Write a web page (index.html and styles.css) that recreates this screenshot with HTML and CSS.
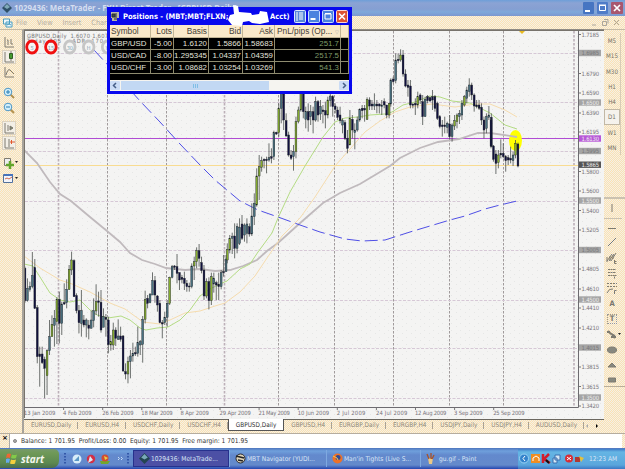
FILE: index.html
```html
<!DOCTYPE html>
<html lang="en">
<head>
  <meta charset="UTF-8">
  <title>MetaTrader</title>
  <link rel="stylesheet" href="styles.css">
</head>
<body>
  <div class="titlebar">
    <svg class="app-icon" width="10" height="10" viewBox="0 0 10 10"><path d="M5 0L10 5L5 10L0 5Z" fill="#2f5068"/><path d="M5 1L8 4L5 6L2 4Z" fill="#7fa9b8"/></svg>
    <div class="title">1029436: MetaTrader - FXU Direct Trader - [GBPUSD,Daily]</div>
    <div class="win-buttons">
      <svg width="11" height="12" viewBox="0 0 11 12"><rect width="11" height="12" rx="1" fill="#4675c2"/><path d="M2 9h5" stroke="#fff" stroke-width="2"/></svg>
      <svg width="11" height="12" viewBox="0 0 11 12"><rect width="11" height="12" rx="1" fill="#4f7cc8"/><path d="M2.5 3.5h6v5h-6zM2 3h7" stroke="#fff" fill="none"/></svg>
      <svg width="12" height="12" viewBox="0 0 12 12"><rect width="12" height="12" rx="1" fill="#a8576f"/><path d="M3 3l6 6M9 3l-6 6" stroke="#fff" stroke-width="1.7"/></svg>
    </div>
  </div>

  <div class="menubar">
    <svg width="10" height="10" viewBox="0 0 10 10"><path d="M.5 1h6v5h-6zM3 4h6v5H3z" fill="#eef8fb" stroke="#4b9dc0"/><path d="M4 7l2-1 2 1" stroke="#4b9dc0" fill="none"/></svg>
    <ul class="menu-list">
      <li>File</li>
      <li>View</li>
      <li>Insert</li>
      <li>Charts</li>
    </ul>
    <svg class="mdi-buttons" width="32" height="9" viewBox="0 0 32 9" fill="none" stroke="#aaa69d"><path d="M2 7h4M12.500 3.500h4v4h-4zM14 1.500h4v4M24 2l5 5M29 2l-5 5"/></svg>
  </div>

  <div class="main">
    <div class="toolbar left">
      <svg width="12" height="12" viewBox="0 0 12 12"><path d="M2 1v10h9M5 4v5M5 4h-1M8 3v5M8 8h2" /></svg>
      <svg class="pressed" width="12" height="12" viewBox="0 0 12 12"><path d="M2 1v10h9"/><path d="M8 0v10"/><path d="M6.500 2.500h3v5h-3z" fill="#439b2f" stroke="#315d24"/></svg>
      <svg width="12" height="12" viewBox="0 0 12 12"><path d="M2 1v10h9M3 9q2-7 4-5t4 4"/></svg>
      <svg class="sep" width="12" height="12" viewBox="0 0 12 12"><path d="M7 7l4 4" stroke="#b3914e" stroke-width="2"/><circle cx="5" cy="5" r="3.800" fill="#d3effa" stroke="#4b95c6"/><path d="M3 5h4M5 3v4" stroke="#267cb5"/></svg>
      <svg width="12" height="12" viewBox="0 0 12 12"><path d="M7 7l4 4" stroke="#b3914e" stroke-width="2"/><circle cx="5" cy="5" r="3.800" fill="#d3effa" stroke="#4b95c6"/><path d="M3 5h4" stroke="#267cb5"/></svg>
      <svg class="sep pressed" width="12" height="12" viewBox="0 0 12 12"><path d="M2 1v10h9M5 3v6"/><path d="M7 4l3 2-3 2z" fill="#74806c"/></svg>
      <svg class="pressed" width="12" height="12" viewBox="0 0 12 12"><path d="M2 1v10h9M6 2v8"/><path d="M7 5h5M8.500 3v4" stroke="#e2582d"/></svg>
      <svg class="sep" width="15" height="12" viewBox="0 0 15 12"><path d="M1.500 1.500h6v7h-6z" fill="#eee"/><path d="M7 4v8M3 8h8" stroke="#62a52b" stroke-width="2.500"/><path d="M12 4h3l-1.500 2z" fill="#222" stroke="none"/></svg>
      <svg width="15" height="12" viewBox="0 0 15 12"><path d="M.5 1.500h9v8h-9z" fill="#f2f4fa" stroke="#52719c"/><path d="M1 2h9" stroke="#4674bd" stroke-width="2"/><path d="M2 6l2-1 2 1 3-2" stroke="#cf6a50" fill="none"/><path d="M12 4h3l-1.500 2z" fill="#222" stroke="none"/></svg>
    </div>

    <div class="workspace">
      <svg id="chart" width="580" height="389" viewBox="24 30 580 389">
        <defs>
          <pattern id="dots" width="9" height="7" patternUnits="userSpaceOnUse"><path d="M1 1.500h1M6 4.500h1" stroke="#e6e7e6"/></pattern>
        </defs>
        <rect x="24" y="30" width="580" height="389" fill="#f4f4f3"/>
        <rect x="24" y="30" width="580" height="389" fill="url(#dots)"/>
        <g id="grid"></g>
        <path d="M24 138.500H579" stroke="#b04bd4"/>
        <path d="M24 165.500H579" stroke="#f8dc92"/>
        <ellipse cx="515.500" cy="140.500" rx="6.500" ry="10.500" fill="#ff0"/>
        <path d="M519 31h6l-3 3z" fill="#e8b91e"/>
        <path class="ma slow" d="M24 150L37 163 50 182 60 194 71 201 90 217 107 231 120 242 130 253 142 260 155 264 166 268 185 270 200 269 215 271 230 270 243 266 257 260 267 251 278 243 299 224 323 203 340 193 360 184 390 166 400 158 420 148 438 142 459 139 478 133 490 133 517 137"/>
        <path class="ma orange" d="M24 256L40 268 60 280 72 284 90 292 110 303 125 309 143 322 160 324 170 320 185 313 200 311 215 306 225 303 240 292 255 276 265 261 282 236 300 218 315 197 335 166 350 149 365 132 380 121 395 112 410 107 432 104 455 107 475 104 490 104 505 110 517 117"/>
        <path class="ma green" d="M24 264L33 266 40 277 50 293 60 300 70 302 80 300 90 310 97 315 108 318 121 316 130 320 140 328 146 330 157 328 168 327 180 320 190 310 200 296 210 289 220 284 227 281 240 269 250 264 258 252 272 233 278 218 290 192 305 166 323 137 335 122 345 118 358 117 370 115 385 114 392 112 403 105 415 102 430 96 440 97 452 101 470 103 490 113 505 125 517 129"/>
        <path class="ma blue" d="M94 50L106 63 140 101 160 122 180 144 200 165 215 180 240 201 258 210 278 217 300 225 320 232 345 239 362 241 385 240 410 232 430 226 450 220 465 216 485 209 500 205 517 201"/>
        <g id="candles"></g>
        <g class="legend">
          <text x="27" y="37.500" textLength="92">GBPUSD,Daily&#160; 1.6070 1.6076 1.</text>
          <text x="27" y="43.200" textLength="76">Today 205&#160; &#160; ADR: 170</text>
        </g>
        <g id="timeframes"></g>
        <path d="M24 30.500H604M24.500 30V418" stroke="#77736c"/>
        <path d="M578.500 31V407.500H24" fill="none" stroke="#6d6b70"/>
        <g id="axis"></g>
      </svg>
      <ul class="tabs">
        <li>EURUSD,Daily</li><li>EURUSD,H4</li><li>USDCHF,Daily</li><li>USDCHF,H4</li>
        <li class="active">GBPUSD,Daily</li>
        <li>GBPUSD,H4</li><li>EURGBP,Daily</li><li>EURGBP,H4</li><li>USDJPY,Daily</li><li>USDJPY,H4</li><li>AUDUSD,Daily</li>
        <li class="arrows"><svg width="20" height="6" viewBox="0 0 20 6"><path d="M4 1v4L2 3z" fill="#aaa"/><path d="M12 1v4l2-2z"/></svg></li>
      </ul>
    </div>

    <div class="toolbar right">
      <div class="periods">
        <span>M5</span><span>M15</span><span>M30</span><span>H1</span><span>H4</span><span class="on">D1</span><span>W1</span><span>MN</span>
      </div>
      <div class="tools">
        <svg viewBox="0 0 18 12"><path d="M8 2v8"/></svg>
        <svg class="sep" viewBox="0 0 18 12"><path d="M4 7.500h8"/></svg>
        <svg viewBox="0 0 18 12"><path d="M4 10l8-8"/></svg>
        <svg viewBox="0 0 18 12"><path d="M3 9l5-7M5 9l5-7M7 9l5-8M3 5v5M6 4v5M9 3v4M10.500 8v3.500h2M10.500 9.500h2"/></svg>
        <svg viewBox="0 0 18 12"><path d="M4 2.500h8M4 5.500h8M4 8.500h6M10.500 11.500v-3h2.500"  stroke-dasharray="2 .5"/></svg>
        <svg viewBox="0 0 18 12"><path d="M3 1.500h10M3 4.500h10" stroke-dasharray="2 1"/><path d="M3 11q2-5 6-4M10.500 12V8.500h2"/></svg>
        <b>A</b>
        <b class="boxed">T</b>
        <svg viewBox="0 0 18 12"><path d="M4 3l3 3M3 4h3M8 7l3 3M7 9h5M6 5l5 3" stroke-width="1.800"/><path d="M14 5h3l-1.500 2z" fill="#222" stroke="none"/></svg>
        <svg viewBox="0 0 18 12"><ellipse cx="8" cy="6" rx="4.500" ry="3" fill="#87887f"/></svg>
        <svg viewBox="0 0 18 12"><path d="M8 4l4 4H4z" fill="#87887f"/></svg>
        <svg viewBox="0 0 18 12"><path d="M4.500 4h7v4h-7z" fill="#87887f"/></svg>
      </div>
    </div>
  </div>

  <div class="status">
    <div class="status-grip">×</div>
    <div class="status-text"><i></i><span>Balance: 1 701.95&#160; Profit/Loss: 0.00&#160; Equity: 1 701.95&#160; Free margin: 1 701.95</span></div>
  </div>

  <div class="taskbar">
    <div class="start">
      <svg width="12" height="11" viewBox="0 0 12 11"><path d="M1 1q2-1 4 0L4 5q-2-1-4 0z" fill="#ed6734"/><path d="M6 1.500q2 1 5 0L10 5q-2 1-5 0z" fill="#83ca49"/><path d="M0 6q2-1 4 0l-1 4q-1-1-3 0z" fill="#66a9ec"/><path d="M5 6.500q2 1 5 0l-1 4q-2 1-5 0z" fill="#f5cf3d"/></svg>
      <em>start</em>
    </div>
    <div class="quick">
      <svg width="66" height="12" viewBox="0 0 66 12"><path d="M1 0v12M64 0v12" stroke="#23479c" stroke-dasharray="1.500 1.500" stroke-width="1.500"/><circle cx="13" cy="6" r="4.500" fill="#d8edf9"/><path d="M10 8l5-5v5z" fill="#5a97c6"/><circle cx="27" cy="6" r="4.200" fill="#d32f45"/><path d="M24 10l2-7 3 4z" fill="#dceaf5"/><path d="M36 8h10l-2 3h-7z" fill="#72a72d"/><circle cx="41" cy="5" r="3.500" fill="#d14c34"/><path d="M40 3l4 2-3 2z" fill="#edd144"/><path d="M54 4l1.500 1.500L54 7M57 4l1.500 1.500L57 7" stroke="#c6dcf5" fill="none"/></svg>
    </div>
    <div class="task active"><svg width="11" height="11" viewBox="0 0 10 10"><path d="M5 0L10 5L5 10L0 5Z" fill="#234552"/><path d="M5 1L8 4L5 6L2 4Z" fill="#79a9b8"/></svg><span>1029436: MetaTrade...</span></div>
    <div class="task"><svg width="11" height="11" viewBox="0 0 11 11"><circle cx="5.500" cy="5.500" r="4.500" fill="#ddd2b8" stroke="#28292e"/><path d="M1 3l8 2M3 7l5 1" stroke="#222" stroke-width="1.500"/></svg><span>MBT Navigator (YUDI...</span></div>
    <div class="task firefox"><svg width="11" height="11" viewBox="0 0 11 11"><circle cx="5.500" cy="5.500" r="5" fill="#ed7128"/><circle cx="6" cy="4.500" r="2.500" fill="#334a93"/><path d="M1 3l4 2 1 2" stroke="#ffc64c" fill="none"/></svg><span>Man'in Tights (Live S...</span></div>
    <div class="task paint"><svg width="9" height="11" viewBox="0 0 9 11"><path d="M2 5h5L6 11H3z" fill="#eac986"/><path d="M3 6L1 1M5 6V0M6 6l2-4" stroke="#a6532b" stroke-width="1.300"/></svg><span>gu.gif - Paint</span></div>
    <div class="tray">
      <svg width="68" height="13" viewBox="0 0 68 13"><circle cx="6" cy="6.500" r="4.500" fill="#3483cc" stroke="#9bd3f4"/><path d="M7 4L5 6.500 7 9" stroke="#fff" fill="none"/><rect x="13" y="2" width="9" height="9" fill="#f08d22"/><path d="M15 9V6l3-2 3 2v3" stroke="#fff" fill="none"/><path d="M25 2v9M31 2l-5 5 6 4" stroke="#d31d2b" stroke-width="2.500" fill="none"/><path d="M28 8l3 3" stroke="#111" stroke-width="2"/><path d="M37 3h5v5h-5zM35 6h4v5h-4z" fill="#d7e8f5" stroke="#3a6eaf"/><circle cx="51" cy="6.500" r="4" fill="#d72d35"/><path d="M49 5l4 3M53 5l-4 3" stroke="#fff"/><path d="M57 5h5v5h-5z" fill="#b03832"/><path d="M61 4l5 2-3 4z" fill="#e4c13b"/></svg>
      <span>12:23 AM</span>
    </div>
  </div>

  <!-- floating positions window -->
  <div class="positions">
    <div class="pos-title">
      <svg width="10" height="10" viewBox="0 0 10 10"><path d="M1 1h8v6H7v3H2V7H1z" fill="#bab9a5"/><path d="M2 3h3v3H2zM6 2v5M4 8h3" stroke="#292e35" fill="#3f4a4a"/></svg>
      <span>Positions - (MBT;MBT;FLXN;</span><span class="acct">Acct)</span>
      <svg class="scribble" width="47" height="21" viewBox="0 0 47 21"><path d="M6 0l5 1 1 6 12 1 1 2 7-1 1-3 7 1 2 10-9 2-8-1-3-2-6 1-1 4-10-1-4-5 2-5 4-1z" fill="#fff"/></svg>
      <div class="pos-buttons">
        <svg width="12" height="13" viewBox="0 0 12 13"><rect x=".5" y=".5" width="11" height="12" rx="1" fill="#5687d9" stroke="#dce8ff"/><path d="M3 2v9M5 3h4M5 5h4M5 7h4M5 9h4" stroke="#fff"/></svg>
        <svg width="12" height="13" viewBox="0 0 12 13"><rect x=".5" y=".5" width="11" height="12" rx="1" fill="#4c82df" stroke="#c8dcff"/><path d="M2.500 9h5" stroke="#fff" stroke-width="2"/></svg>
        <svg width="12" height="13" viewBox="0 0 12 13"><rect x=".5" y=".5" width="11" height="12" rx="1" fill="#4c82df" stroke="#c8dcff"/><path d="M3 4h6v5H3zM3 3.500h6" fill="none" stroke="#fff"/></svg>
        <svg width="12" height="13" viewBox="0 0 12 13"><rect x=".5" y=".5" width="11" height="12" rx="1" fill="#dd5435" stroke="#ffd8cf"/><path d="M3 3.500l6 6M9 3.500l-6 6" stroke="#fff" stroke-width="1.700"/></svg>
      </div>
    </div>
    <div class="pos-row head"><span>Symbol</span><span>Lots</span><span>Basis</span><span>Bid</span><span>Ask</span><span>PnL/pips (Op... <small>▽</small></span><span></span></div>
    <div class="pos-row"><span>GBP/USD</span><span>-5.00</span><span>1.6120</span><span>1.5866</span><span>1.58683</span><span>251.7</span><span></span></div>
    <div class="pos-row"><span>USD/CAD</span><span>-8.00</span><span>1.295345</span><span>1.04337</span><span>1.04359</span><span>2517.5</span><span></span></div>
    <div class="pos-row"><span>USD/CHF</span><span>-3.00</span><span>1.08682</span><span>1.03254</span><span>1.03269</span><span>541.3</span><span></span></div>
    <div class="pos-scroll">
      <svg width="10" height="9" viewBox="0 0 10 9"><rect width="10" height="9" rx="1" fill="#cbdcf5"/><path d="M6 2L3.500 4.500 6 7" fill="none" stroke="#465f87" stroke-width="1.500"/></svg>
      <div class="thumb"><i></i><i></i><i></i></div>
      <svg class="next" width="10" height="9" viewBox="0 0 10 9"><rect width="10" height="9" rx="1" fill="#cbdcf5"/><path d="M4 2l2.500 2.500L4 7" fill="none" stroke="#465f87" stroke-width="1.500"/></svg>
    </div>
  </div>

  <script src="chart.js"></script>
</body>
</html>
```
FILE: styles.css
```css
* {
  box-sizing: border-box;
}
body {
  margin: 0;
  width: 625px;
  height: 469px;
  overflow: hidden;
  display: flex;
  flex-direction: column;
  position: relative;
  font-family: "DejaVu Sans Condensed", "DejaVu Sans", sans-serif;
  font-size: 6px;
  white-space: nowrap;
  background: #f8ead0;
}
ul {
  list-style: none;
  margin: 0;
  padding: 0;
}
svg {
  display: block;
  flex: none;
}
.titlebar {
  height: 16px;
  flex: none;
  display: flex;
  align-items: center;
  padding: 0 2px;
  gap: 2px;
  background: linear-gradient(#6e9fd8, #8ba3d4 3px, #859fd2 9px, #7fa9da 12px, #7c97cf);
}
.title {
  width: 560px;
  font: bold 7.9px "Noto Sans", sans-serif;
  color: #d5def0;
  overflow: hidden;
}
.win-buttons {
  margin-left: auto;
  display: flex;
  gap: 3px;
}
.menubar {
  height: 13px;
  flex: none;
  display: flex;
  align-items: center;
  padding: 0 3px;
}
.menubar,
.toolbar,
.tabs,
.status {
  background: repeating-conic-gradient(#fbe2b2 0 25%, #f5f0e6 0 50%) 0 0 / 2px 2px;
}
.menu-list {
  display: flex;
  gap: 10px;
  margin-left: 3px;
  font-size: 7.3px;
  color: #b5afa4;
}
.mdi-buttons {
  margin-left: auto;
}
.main {
  height: 404px;
  flex: none;
  display: flex;
}
.toolbar {
  border-top: 1px solid #c6bba6;
}
.toolbar svg {
  stroke: #7e7b70;
  fill: none;
}
.left {
  width: 24px;
  padding: 6px 0 0 3px;
  display: flex;
  flex-direction: column;
  gap: 3.2px;
  border-right: 2px solid #a7a39b;
}
.left .pressed {
  background: #f3efe7;
  outline: 1px solid #dcd2c0;
}
.left .sep {
  margin-top: 5px;
}
.workspace {
  width: 580px;
  padding-top: 1px;
  background: #8f8b84;
  display: flex;
  flex-direction: column;
}
.legend {
  font-size: 5.8px;
  fill: #777;
}
.ma {
  fill: none;
  stroke-width: 1;
}
.slow {
  stroke: #c0babd;
  stroke-width: 1.8;
}
.orange {
  stroke: #f6dcae;
}
.green {
  stroke: #b4dc84;
}
.blue {
  stroke: #4f4fe6;
  stroke-dasharray: 13 5;
}
.tabs {
  height: 14px;
  display: flex;
  border-top: 1px solid #6b675f;
  color: #8e887c;
  font-size: 6.4px;
  line-height: 10px;
}
.tabs li {
  flex: 1 1 auto;
  text-align: center;
  background: linear-gradient(#aaa294, #aaa294) right 2px / 1px 7px no-repeat;
}
.tabs .active {
  height: 12px;
  margin-top: -1px;
  line-height: 12px;
  background: #fff;
  border: 1px solid #555;
  border-top: 0;
  color: #333;
}
.tabs .arrows {
  flex: none;
  background: none;
  padding-top: 3px;
}
.right {
  width: 21px;
  padding-top: 3px;
}
.periods {
  width: 17px;
  border-right: 1px solid #d8ccb5;
  color: #777267;
  font-size: 6.2px;
}
.periods span {
  display: block;
  height: 15.3px;
  line-height: 15.3px;
  text-align: center;
}
.periods .on {
  background: #f5f2ec;
  border: 1px solid #c2b8a5;
  line-height: 13px;
}
.tools {
  margin-top: 42px;
  padding-top: 3px;
  border-top: 2px solid #cbc2b1;
  height: 190px;
  display: flex;
  flex-direction: column;
  gap: 3.4px;
  border-bottom: 1px solid #b9ae9b;
}
.tools svg {
  width: 18px;
  height: 12px;
}
.tools svg.sep {
  height: 15px;
  padding-top: 2px;
  border-top: 1px solid #cbc2b1;
}
.tools b {
  width: 16px;
  height: 12px;
  line-height: 12px;
  text-align: center;
  font-size: 7.5px;
  color: #77766d;
}
.tools .boxed {
  width: 8px;
  height: 8px;
  line-height: 7px;
  margin: 2px 4px;
  outline: 1px dotted #999;
}
.status {
  height: 15px;
  flex: none;
  display: flex;
  border-top: 1px solid #b5ad9f;
}
.status-grip {
  width: 9px;
  font: bold 7px/8px "DejaVu Sans", sans-serif;
  padding-left: 2px;
}
.status-text {
  width: 613px;
  background: #fff;
  border-left: 1px solid #aaa;
  display: flex;
  align-items: center;
  padding-left: 3px;
  gap: 4px;
  font-size: 6.6px;
  color: #333;
}
.status-text i {
  width: 4px;
  height: 4px;
  border-radius: 50%;
  background: #aaa;
  border: 1px solid #888;
}
.taskbar {
  flex: 1;
  display: flex;
  align-items: center;
  background: linear-gradient(#4d74bd, #6fa0dc 3px, #6389cd 7px, #648acb 17px, #2446b0);
  color: #dbe6f6;
  font-size: 6.6px;
}
.start {
  width: 59px;
  height: 19px;
  display: flex;
  align-items: center;
  padding-left: 6px;
  gap: 3px;
  border-radius: 0 5px 7px 0;
  background: linear-gradient(#76996b, #6f9957 4px, #5c8851 14px, #4b6d4c);
}
.start em {
  font: italic bold 10px "Open Sans", sans-serif;
  color: #f5f7ef;
}
.quick {
  width: 74px;
  padding-left: 5px;
}
.task {
  width: 97px;
  height: 17px;
  display: flex;
  align-items: center;
  gap: 1px;
  padding-left: 5px;
  border-left: 1px solid #7fa9e0;
}
.task.active {
  width: 96px;
  background: #4c50a5;
  border: 1px solid #26318d;
}
.firefox {
  width: 94px;
}
.paint {
  width: 98px;
  gap: 4px;
}
.tray {
  flex: 1;
  height: 20px;
  display: flex;
  align-items: center;
  gap: 3px;
  background: linear-gradient(#3f7cc8, #65b5e4 3px, #5aa6dc 16px, #3c78c4);
}

.positions {
  position: absolute;
  left: 107px;
  top: 7px;
  width: 245px;
  height: 87px;
  background: #000;
  border: 3px solid #0808ee;
  border-width: 0 3px 3px;
}
.pos-title {
  height: 18px;
  background: #0808ee;
  color: #fff;
  display: flex;
  align-items: center;
  font: bold 7.5px "DejaVu Sans Condensed", "DejaVu Sans", sans-serif;
  font-stretch: condensed;
}
.pos-title span {
  width: 105px;
  margin-left: 3px;
}
.pos-title .acct {
  width: auto;
  margin-left: 42px;
}
.scribble {
  position: absolute;
  left: 117px;
  top: -2px;
}
.pos-buttons {
  position: absolute;
  right: 1px;
  top: 3px;
  display: flex;
  gap: 2px;
}
.pos-row {
  display: grid;
  grid-template-columns: 41px 23px 35px 34px 32px 66px 8px;
  height: 12px;
  line-height: 11px;
  font-family: "Liberation Sans", sans-serif;
  font-size: 7.9px;
  color: #e3e3dd;
}
.pos-row span {
  border-right: 1px solid #8f8c70;
  border-bottom: 1px solid #8f8c70;
  text-align: right;
  padding-right: 1px;
  overflow: hidden;
}
.pos-row span:first-child {
  text-align: left;
  padding-left: 1px;
}
.pos-row span:nth-child(6) {
  color: #7e9a68;
}
.pos-row.head {
  height: 13px;
  line-height: 13px;
  background: #fae9ca;
  color: #464139;
  font-size: 8.3px;
}
.pos-row.head span {
  border-color: #c2b596;
}
.pos-row.head span:nth-child(6) {
  color: #464139;
  text-align: left;
  padding-left: 2px;
}
.head small {
  font-size: 5px;
  color: #aaa;
}
.pos-scroll {
  margin-top: 6px;
  height: 11px;
  padding: 1px 0;
  display: flex;
  background: #f5f4f0;
}
.thumb {
  width: 148px;
  height: 9px;
  margin-left: 1px;
  display: flex;
  justify-content: center;
  align-items: center;
  gap: 1px;
  background: #c2d8f3;
}
.thumb i {
  width: 1px;
  height: 4px;
  background: #80bfe6;
}
.next {
  margin-left: auto;
}
```
FILE: chart.js
```js
const NS = 'http://www.w3.org/2000/svg';

function add(parent, tag, attrs, text) {
  const el = document.createElementNS(NS, tag);
  for (const k in attrs) el.setAttribute(k, attrs[k]);
  if (text) el.textContent = text;
  document.getElementById(parent).appendChild(el);
}

// grid
[58.5, 107.5, 166.5, 224.5, 278.5, 334.5, 393.5, 449.5, 503.5, 574].forEach(x => {
  const wide = x === 58.5 || x === 224.5 || x === 574;
  add('grid', 'path', { d: `M${x} 31V407`, stroke: wide ? '#bcb0b8' : '#a09a9b', 'stroke-width': wide ? 1.6 : 1, 'stroke-dasharray': '2.5 1.5' });
});
[53.5, 102.5, 151.5, 201.5, 250.5, 300.5, 348.5, 398.5].forEach(y => {
  add('grid', 'path', { d: `M25 ${y}H578`, stroke: '#d6c8d6', 'stroke-dasharray': '3 1.5' });
});

// bars: high, low, body top, body bottom, colour (units are 1/3 px)
const series = [
  { x: 25, y: 240, bars: `80,188,85,182,d 115,185,145,182,t 125,155,140,148,t 36,145,107,140,t 57,207,83,205,d 195,370,203,350,d
    320,440,342,350,d 320,372,342,368,d 350,475,358,385,d 328,465,332,407,g 240,345,290,332,t 226,290,253,290,g 210,320,235,256,t
    172,312,178,245,g 155,310,178,250,d 185,285,192,250,t 130,195,188,192,d 118,205,148,188,t 75,150,88,148,g 35,105,60,90,g
    58,170,62,170,d 160,220,167,212,d 195,280,212,248,d 150,290,212,250,t 225,262,240,255,d 235,292,240,255,t 240,298,255,265,d
    212,265,240,265,t 175,262,212,242,t 133,225,185,213,g 155,230,183,187,d 150,278,187,270,d 205,260,230,262,t 222,290,232,238,d
    230,340,240,314,d 285,332,305,315,g 248,330,270,315,g 262,318,270,295,d 238,300,288,298,t 260,305,288,298,d 285,395,288,393,d
    370,418,395,402,d 350,430,365,402,g 330,415,348,365,t 308,365,340,348,t 320,348,338,342,d 260,350,308,340,t 300,345,305,315,t
    228,368,238,313,t 152,250,178,238,g 165,205,175,190,d 160,190,162,188,t 97,165,122,165,t 108,188,122,165,d 165,215,168,195,d
    180,250,190,248,d 240,295,248,252,d 215,255,232,248,t 180,260,190,232,t 110,195,112,190,g 75,115,80,112,t 75,90,78,82,d
    42,130,80,100,d 97,150,98,120,d 105,130,112,118,d 95,150,115,130,d 120,155,130,140,d 128,155,138,140,d 70,145,78,140,t
    50,120,65,78,g 22,85,32,65,g 12,80,32,55,d 50,100,68,92,d 75,180,90,168,d 115,175,125,168,g 112,208,125,182,d
    98,195,110,182,g 98,158,115,132,t 122,180,128,135,d 98,180,133,140,d 90,148,98,140,t 45,110,95,98,d 45,95,57,95,t` },
  { x: 227.3, y: 90, bars: `460,520,478,510,g 435,490,445,480,g 428,492,440,445,t 400,505,438,475,d 400,490,410,475,t 385,465,412,460,t
    375,450,402,445,d 400,455,405,435,t 385,460,402,430,t 400,440,410,432,d 340,438,378,432,t 310,405,340,380,t 235,350,258,345,g
    195,330,230,258,g 200,245,212,232,g 205,235,208,212,d 200,250,208,212,d 160,215,203,210,t 175,220,200,205,d 122,210,128,200,t
    125,135,127,132,d 40,140,55,128,g 0,100,10,55,t 10,120,12,90,d 70,140,92,138,d 125,200,135,195,d 180,210,195,205,d
    165,242,185,200,t 80,205,95,185,g 50,100,60,95,g 0,65,10,60,g 5,85,10,65,d 50,115,65,88,t 40,125,65,90,d 45,105,65,80,t
    50,130,65,90,d 20,95,35,90,t 30,95,35,75,d 30,90,50,72,t 45,100,60,65,d 35,115,62,75,d 20,85,30,75,g 0,50,18,32,t
    15,80,20,50,d 40,70,48,58,d 50,90,60,82,d 50,100,75,92,d 85,130,92,105,t 90,150,98,145,d 120,190,145,175,d 60,165,85,165,g
    75,145,88,120,d 100,178,120,128,t 80,125,90,120,t 55,95,58,90,t 45,85,55,62,d 45,95,55,60,d 22,90,28,88,g 22,60,30,48,d
    30,60,42,48,d 10,60,42,48,t 30,70,42,48,d 40,70,42,48,d 30,75,45,50,t 25,55,35,45,d 45,85,45,75,d 38,85,40,75,g` },
  { x: 390.8, y: 0, bars: `235,320,240,312,t 230,250,237,245,d 160,250,180,242,t 160,190,178,182,d 148,185,165,180,g 150,230,165,222,d
    208,262,222,258,d 240,290,255,262,d 240,325,258,315,d 310,325,312,316,d 295,345,310,315,d 275,325,290,315,g 280,312,285,300,d
    285,375,305,350,d 290,350,298,350,t 285,310,290,302,d 290,305,293,303,d 270,330,290,300,d 285,335,290,325,d 305,360,310,355,d
    345,385,350,380,d 360,410,375,380,d 350,400,375,380,d 365,400,370,382,t 345,418,372,410,d 370,425,375,410,t 345,390,362,378,g
    340,385,345,365,g 330,372,340,350,t 300,360,310,345,t 285,320,290,315,g 260,310,270,295,t 235,290,255,275,t 248,300,255,285,d
    280,335,285,318,d 300,325,315,320,d 300,330,315,325,d 310,375,322,360,d 350,415,360,390,d 340,400,350,385,t 318,360,345,352,t
    340,440,352,440,d` },
  { x: 491, y: 90, bars: `85,175,90,168,d 165,215,168,208,d 180,252,192,220,d 180,235,195,218,g 148,205,190,195,d 160,205,190,200,d
    195,245,200,212,d 195,225,203,210,d 170,220,205,210,d 185,228,195,212,t 150,205,160,195,g 158,232,162,228,d` }
];
const fills = { d: '#10103e', g: '#86ad2e', t: '#4a7280' };
series.forEach(s => {
  s.bars.trim().split(/\s+/).forEach((bar, i) => {
    const [h, l, t, b, c] = bar.split(',');
    const x = s.x + i * 2.452;
    add('candles', 'path', { d: `M${x} ${s.y + h / 3}V${s.y + l / 3}`, stroke: '#4a4f4c', 'stroke-width': 0.8 });
    add('candles', 'rect', { x: x - 0.9, y: s.y + t / 3, width: 1.8, height: Math.max((b - t) / 3, 1), fill: fills[c], stroke: '#1d2228', 'stroke-width': 0.4 });
  });
});

// timeframe rings
['5', '15', '30', 'H', 'H'].forEach((label, i) => {
  const cx = 32 + i * 18.9;
  add('timeframes', 'ellipse', { cx, cy: 47, rx: 5.3, ry: 6, fill: 'none', stroke: i < 2 ? '#f01010' : '#c6c6c6', 'stroke-width': 2.8 });
  add('timeframes', 'text', { x: cx, y: 50, 'text-anchor': 'middle', 'font-size': 5.5, fill: '#7fa6b8' }, label);
});

// price scale, boxed levels get a background
const prices = [
  [34.5, '1.7185'], [53, '1.6985', '#a5a5a5'], [73.5, '1.6790'], [93, '1.6590'], [102.5, '1.6500', '#a5a5a5'], [113, '1.6390'],
  [132, '1.6195'], [138.5, '1.6130', '#b858d8'], [151, '1.5995', '#a5a5a5'], [164.7, '1.5865', '#555'], [171.5, '1.5800'],
  [191, '1.5600'], [200.5, '1.5500', '#a5a5a5'], [210.5, '1.5400'], [230, '1.5205'], [250, '1.5005', '#a5a5a5'], [269, '1.4805'],
  [289, '1.4610'], [299.5, '1.4500', '#a5a5a5'], [308, '1.4410'], [328, '1.4210'], [347.5, '1.4015', '#a5a5a5'], [367, '1.3815'],
  [386.5, '1.3615'], [397.5, '1.3500', '#a5a5a5'], [406, '1.3420']
];
prices.forEach(([y, label, bg]) => {
  if (bg) add('axis', 'rect', { x: 579, y: y - 3.2, width: 22, height: 6.4, fill: bg });
  else add('axis', 'path', { d: `M579 ${y}h2`, stroke: '#777' });
  const muted = bg === '#a5a5a5' && !/00$/.test(label);
  add('axis', 'text', { x: 581.5, y: y + 2.2, textLength: 17.5, 'font-size': 5.9, fill: !bg ? '#77737a' : muted ? '#77777a' : '#eee' }, label);
});

// dates
['13 Jan 2009', '4 Feb 2009', '26 Feb 2009', '18 Mar 2009', '8 Apr 2009', '29 Apr 2009', '21 May 2009', '10 Jun 2009',
  '2 Jul 2009', '24 Jul 2009', '12 Aug 2009', '3 Sep 2009', '25 Sep 2009'].forEach((d, i) => {
  const x = 24.5 + i * 39.1;
  add('axis', 'path', { d: `M${x} 408v2`, stroke: '#777' });
  add('axis', 'text', { x: x - 0.5, y: 415.2, textLength: d.length * 2.85, 'font-size': 5.8, fill: '#77737a' }, d);
});
```
